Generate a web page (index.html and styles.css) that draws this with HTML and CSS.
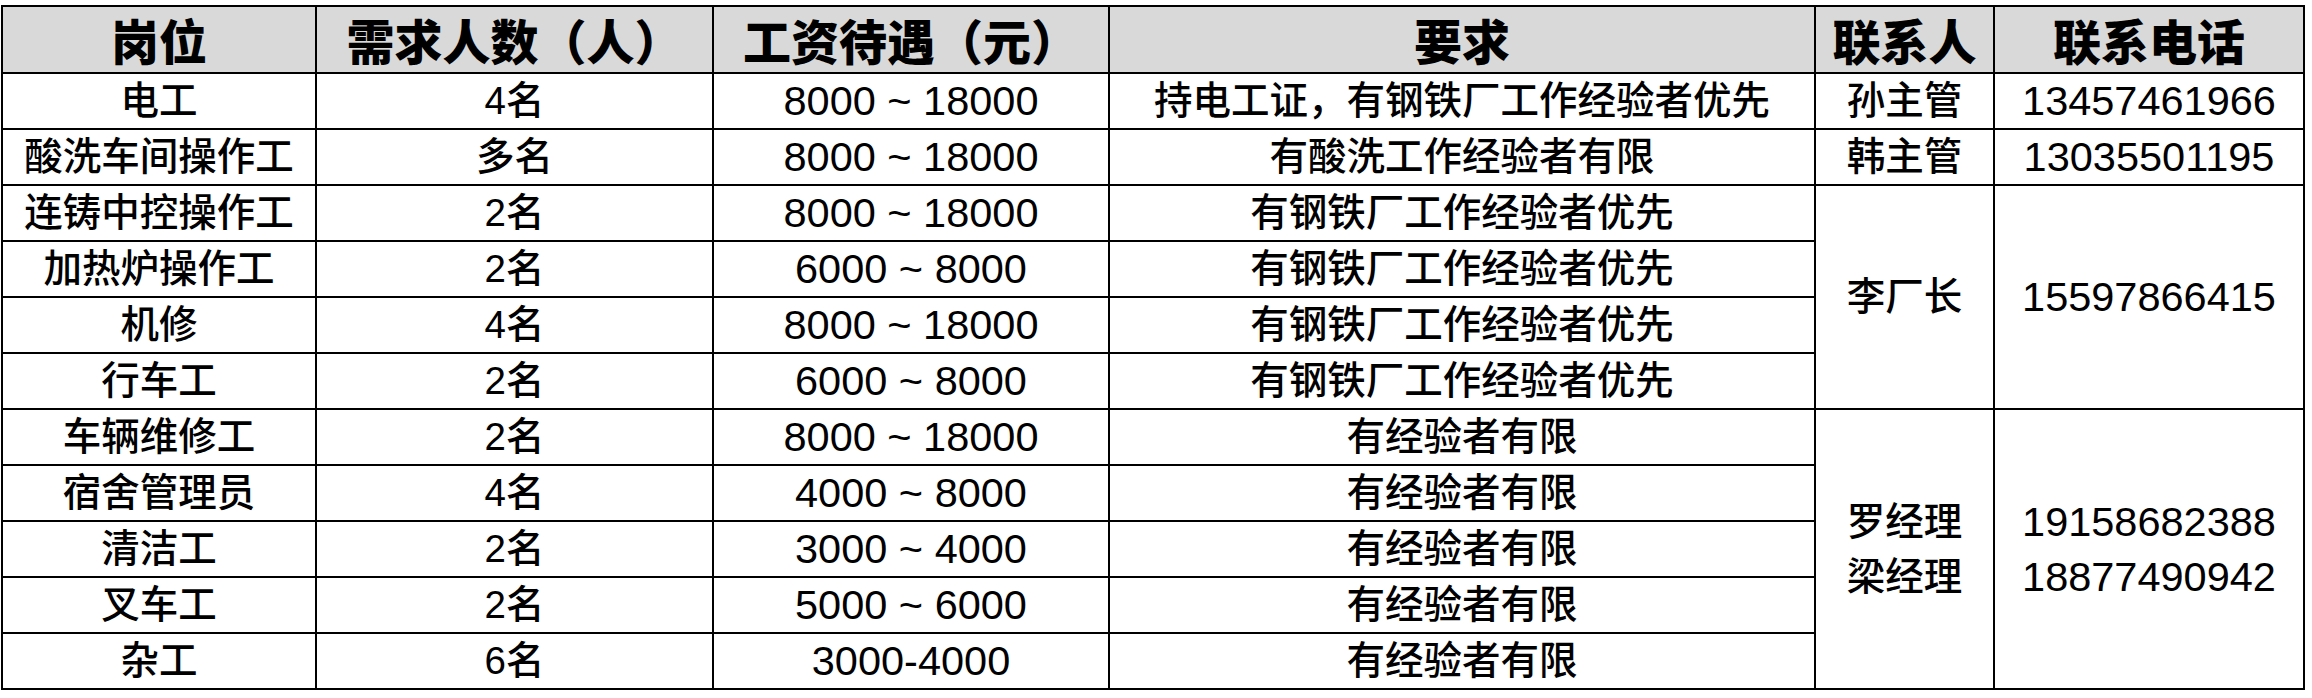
FILE: index.html
```html
<!DOCTYPE html>
<html lang="zh-CN">
<head>
<meta charset="utf-8">
<title>招聘岗位</title>
<link rel="stylesheet" href="styles.css">
</head>
<body>
<table class="jobs">
  <colgroup>
    <col class="c-post">
    <col class="c-count">
    <col class="c-pay">
    <col class="c-req">
    <col class="c-contact">
    <col class="c-phone">
  </colgroup>
  <thead>
    <tr>
      <th>岗位</th>
      <th>需求人数（人）</th>
      <th>工资待遇（元）</th>
      <th>要求</th>
      <th>联系人</th>
      <th>联系电话</th>
    </tr>
  </thead>
  <tbody>
    <tr>
      <td>电工</td><td>4名</td><td class="num">8000 ~ 18000</td>
      <td>持电工证，有钢铁厂工作经验者优先</td><td>孙主管</td><td class="num">13457461966</td>
    </tr>
    <tr>
      <td>酸洗车间操作工</td><td>多名</td><td class="num">8000 ~ 18000</td>
      <td>有酸洗工作经验者有限</td><td>韩主管</td><td class="num">13035501195</td>
    </tr>
    <tr>
      <td>连铸中控操作工</td><td>2名</td><td class="num">8000 ~ 18000</td>
      <td>有钢铁厂工作经验者优先</td><td rowspan="4">李厂长</td><td rowspan="4" class="num">15597866415</td>
    </tr>
    <tr>
      <td>加热炉操作工</td><td>2名</td><td class="num">6000 ~ 8000</td>
      <td>有钢铁厂工作经验者优先</td>
    </tr>
    <tr>
      <td>机修</td><td>4名</td><td class="num">8000 ~ 18000</td>
      <td>有钢铁厂工作经验者优先</td>
    </tr>
    <tr>
      <td>行车工</td><td>2名</td><td class="num">6000 ~ 8000</td>
      <td>有钢铁厂工作经验者优先</td>
    </tr>
    <tr>
      <td>车辆维修工</td><td>2名</td><td class="num">8000 ~ 18000</td>
      <td>有经验者有限</td>
      <td rowspan="5" class="multi">罗经理<br>梁经理</td>
      <td rowspan="5" class="num multi">19158682388<br>18877490942</td>
    </tr>
    <tr>
      <td>宿舍管理员</td><td>4名</td><td class="num">4000 ~ 8000</td>
      <td>有经验者有限</td>
    </tr>
    <tr>
      <td>清洁工</td><td>2名</td><td class="num">3000 ~ 4000</td>
      <td>有经验者有限</td>
    </tr>
    <tr>
      <td>叉车工</td><td>2名</td><td class="num">5000 ~ 6000</td>
      <td>有经验者有限</td>
    </tr>
    <tr>
      <td>杂工</td><td>6名</td><td class="num">3000-4000</td>
      <td>有经验者有限</td>
    </tr>
  </tbody>
</table>
</body>
</html>
```
FILE: styles.css
```css
html, body {
  margin: 0;
  padding: 0;
  background: #ffffff;
}

.jobs {
  border-collapse: collapse;
  table-layout: fixed;
  width: 2304px;
  margin: 5px 0 0 1px;
  font-family: "Liberation Sans", "Noto Sans CJK SC", sans-serif;
  color: #000;
}

.c-post { width: 314px; }
.c-count { width: 397px; }
.c-pay { width: 396px; }
.c-req { width: 706px; }
.c-contact { width: 179px; }
.c-phone { width: 310px; }

.jobs th,
.jobs td {
  border: 2px solid #000;
  padding: 0;
  text-align: center;
  vertical-align: middle;
  white-space: nowrap;
}

.jobs thead tr {
  height: 67px;
}

.jobs th {
  background: #d9d9d9;
  font-family: "Noto Sans CJK SC", sans-serif;
  font-weight: 900;
  font-size: 48px;
  line-height: 1.2;
}

.jobs tbody tr {
  height: 56px;
}

.jobs td {
  font-size: 38.5px;
  font-weight: 500;
  line-height: 1.2;
}

.jobs td.num {
  font-size: 41.5px;
  font-weight: 400;
}

.jobs td.multi {
  line-height: 55px;
}
```
